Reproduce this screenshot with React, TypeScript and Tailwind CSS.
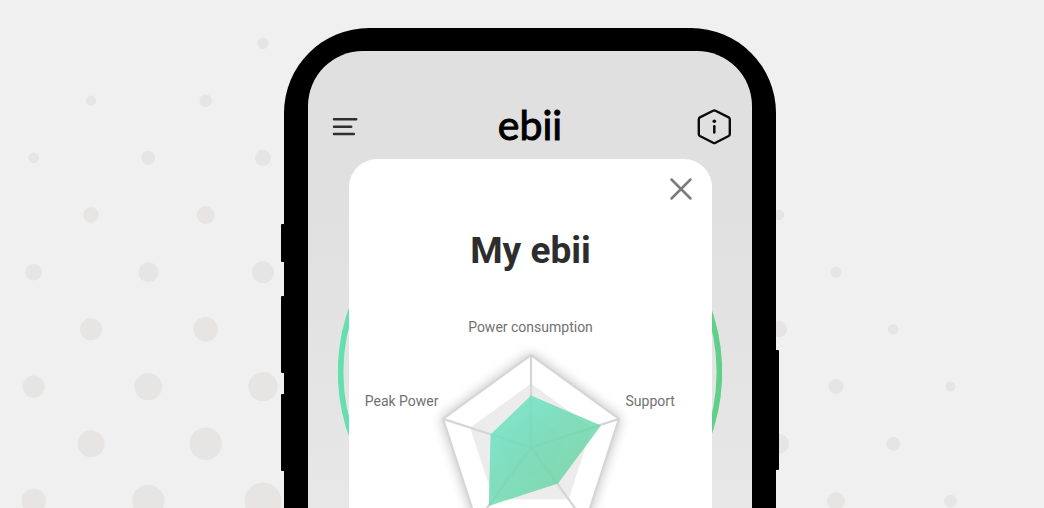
import React from "react";

type Dot = [x: number, y: number, r: number];

const leftDots: Dot[] = [
  [263, 43.3, 5.7],
  [91, 100.6, 5], [205.7, 100.6, 6.3],
  [33.7, 157.8, 5.3], [148.3, 157.8, 7], [263, 157.8, 8],
  [91, 215, 7.7], [205.7, 215, 9],
  [33.7, 272.2, 8.3], [148.3, 272.2, 10], [263, 272.2, 11],
  [91, 329.3, 11], [205.7, 329.3, 12.3],
  [33.7, 386.6, 11], [148.3, 386.6, 13.7], [263, 386.6, 14.7],
  [91, 443.7, 13.5], [205.7, 443.7, 16.2],
  [33.7, 501, 12.3], [148.3, 501, 16.2], [263, 501, 18.5],
];

const rightDots: Dot[] = [
  [779, 215, 5.3], [836, 272.2, 5.6],
  [779, 329.3, 8], [893.2, 329.3, 5.3],
  [836, 386.6, 7.5], [950.5, 386.6, 5],
  [779, 443.7, 10], [893.2, 443.7, 7],
  [836, 501, 9], [950.5, 501, 6.3],
];

function DotPattern() {
  return (
    <svg
      aria-hidden="true"
      className="absolute inset-0 h-full w-full"
      viewBox="0 0 1044 508"
      preserveAspectRatio="xMidYMin slice"
      fill="#e6e5e3"
    >
      {[...leftDots, ...rightDots].map(([x, y, r]) => (
        <circle key={`${x}-${y}`} cx={x} cy={y} r={r} />
      ))}
    </svg>
  );
}

function SideButtons() {
  return (
    <div aria-hidden="true">
      <span className="absolute top-[196px] -left-[3px] h-[38px] w-2 rounded-l-[1px] bg-black" />
      <span className="absolute top-[268px] -left-[3px] h-[77px] w-2 rounded-l-[1px] bg-black" />
      <span className="absolute top-[366px] -left-[3px] h-[77px] w-2 rounded-l-[1px] bg-black" />
      <span className="absolute top-[322px] -right-[3px] h-[120px] w-2 rounded-r-[1px] bg-black" />
    </div>
  );
}

function AppHeader() {
  return (
    <header className="relative grid grid-cols-[1fr_auto_1fr] items-center px-5 pt-14 pb-3">
      <button type="button" aria-label="Menu" className="justify-self-start pl-1">
        <svg width="26" height="20" viewBox="0 0 26 20" stroke="#2f2f2f" strokeWidth="2.5" strokeLinecap="round">
          <path d="M2 2.3H24.2M2 9.7H19.2M2 17H21.8" />
        </svg>
      </button>
      <span className="pb-1 font-['Lato',sans-serif] text-[41px] leading-9 text-black [-webkit-text-stroke:1px_black]">
        ebii
      </span>
      <button type="button" aria-label="Information" className="justify-self-end">
        <svg className="overflow-visible" width="34" height="36" viewBox="0 0 34 36" fill="none" stroke="#0c0c0c" strokeLinecap="round" strokeLinejoin="round">
          <path
            strokeWidth="2.4"
            d="M15.1 1.8Q16.3 1.1 17.5 1.8L30.7 8.4Q31.8 9 31.8 10.4V25Q31.8 26.4 30.7 27L17.5 33.8Q16.3 34.5 15.1 33.8L1.9 27Q0.8 26.4 0.8 25V10.4Q0.8 9 1.9 8.4Z"
          />
          <path strokeWidth="2.5" d="M16.3 17.3V23.6" />
          <circle cx="16.3" cy="12.3" r="1.8" fill="#0c0c0c" stroke="none" />
        </svg>
      </button>
    </header>
  );
}

function ProgressRing() {
  return (
    <svg
      aria-hidden="true"
      className="absolute top-[129px] left-1/2 -translate-x-1/2"
      width="384"
      height="384"
      viewBox="0 0 384 384"
      fill="none"
    >
      <defs>
        <linearGradient id="ring" x1="0" x2="1" y1="0" y2="0">
          <stop offset="0" stopColor="#64e0b0" />
          <stop offset="1" stopColor="#5fd087" />
        </linearGradient>
      </defs>
      <circle cx="192" cy="192" r="189.4" stroke="url(#ring)" strokeWidth="5.6" />
    </svg>
  );
}

function pentagon(radius: number) {
  return [0, 1, 2, 3, 4]
    .map((i) => {
      const a = (i * 72 * Math.PI) / 180;
      return `${(radius * Math.sin(a)).toFixed(2)},${(-radius * Math.cos(a)).toFixed(2)}`;
    })
    .join(" ");
}

function RadarChart() {
  const corners = pentagon(92.5).split(" ");
  return (
    <svg
      role="img"
      aria-label="Power consumption, support and peak power"
      className="overflow-visible"
      width="178"
      height="172"
      viewBox="-89 -94.5 178 172"
    >
      <defs>
        <linearGradient id="score" x1="0" y1="0" x2="1" y2="1">
          <stop offset="0.2" stopColor="#66e0be" />
          <stop offset="0.8" stopColor="#66d29e" />
        </linearGradient>
        <filter id="soft" x="-20%" y="-20%" width="140%" height="140%">
          <feGaussianBlur stdDeviation="6" />
        </filter>
      </defs>
      <polygon points={pentagon(95)} fill="#000" opacity="0.22" filter="url(#soft)" />
      <polygon points={pentagon(92.5)} fill="#fff" />
      <polygon points={pentagon(64)} fill="#ececec" />
      <polygon points={pentagon(35)} fill="#e6e6e6" />
      <g stroke="#d6d6d6" strokeWidth="2.2" fill="none">
        <polygon points={pentagon(92.5)} />
        {corners.map((c) => {
          const [x, y] = c.split(",");
          return <line key={c} x1="0" y1="0" x2={x} y2={y} />;
        })}
      </g>
      <polygon points="0,-52 70,-22 27,36 -42.2,58.4 -40.5,-13" fill="url(#score)" fillOpacity="0.8" />
    </svg>
  );
}

function ScoreCard() {
  return (
    <section className="relative mr-10 ml-[41px] rounded-t-[28px] bg-white pb-16">
      <div className="flex justify-end px-[19px] pt-[18px]">
        <button type="button" aria-label="Close">
          <svg width="24" height="24" viewBox="0 0 24 24" stroke="#7b7b7b" strokeWidth="2.5" strokeLinecap="round">
            <path d="M2.5 2.5L21.5 21.5M21.5 2.5L2.5 21.5" />
          </svg>
        </button>
      </div>
      <h1 className="mt-[30px] text-center text-[37px] leading-10 font-bold text-[#2d2d2d]">My ebii</h1>
      <div className="mt-[46px] text-sm leading-5 text-[#717171]">
        <p className="text-center">Power consumption</p>
        <div className="mt-4 grid grid-cols-[1fr_auto_1fr]">
          <span className="pt-[38px] pr-[3px] text-right">Peak Power</span>
          <RadarChart />
          <span className="pt-[38px] pl-[6px]">Support</span>
        </div>
      </div>
    </section>
  );
}

export default function App() {
  return (
    <main className="relative h-screen overflow-hidden bg-[#f0f0f0] font-['Roboto',sans-serif]">
      <DotPattern />
      <div className="flex justify-center pt-7 pl-4">
        <div className="relative w-full max-w-[492px] rounded-t-[85px] bg-black px-6 pt-[23px]">
          <SideButtons />
          <div className="relative overflow-hidden rounded-t-[55px] bg-linear-to-b from-[#e0e0e0] from-30% to-[#e9e9e9]">
            <ProgressRing />
            <AppHeader />
            <ScoreCard />
          </div>
        </div>
      </div>
    </main>
  );
}
